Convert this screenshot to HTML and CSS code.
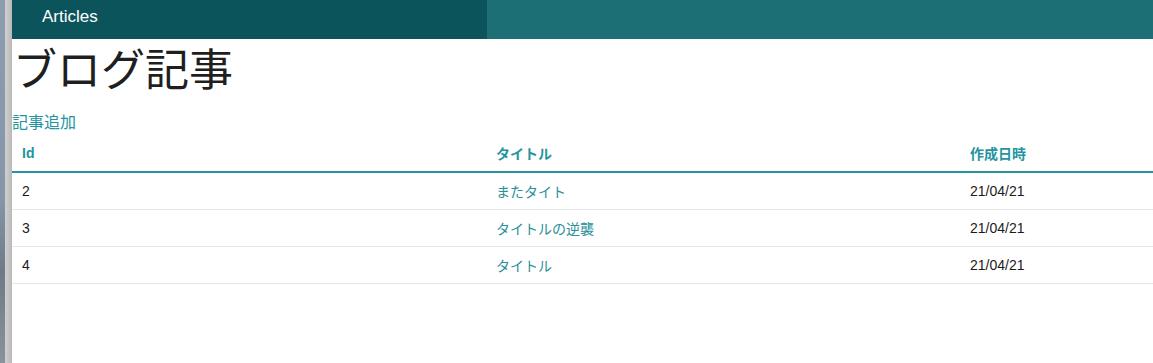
FILE: index.html
```html
<!DOCTYPE html>
<html lang="ja">
<head>
    <meta charset="UTF-8">
    <meta name="viewport" content="width=device-width, initial-scale=1.0">
    <title>Articles</title>
    <link rel="stylesheet" href="styles.css">
</head>
<body>
    <div class="desktop">
        <div class="desktop-bg"></div>
        <div class="window-edge"></div>
    </div>
    <div class="page">
        <nav class="top-nav">
            <div class="top-nav-title">Articles</div>
            <div class="top-nav-rest"></div>
        </nav>
        <div class="content">
            <h1 class="title">ブログ記事</h1>
            <a class="add-link" href="#">記事追加</a>
            <table class="articles">
                <thead>
                    <tr>
                        <th class="col-id">Id</th>
                        <th class="col-title">タイトル</th>
                        <th class="col-date">作成日時</th>
                    </tr>
                </thead>
                <tbody>
                    <tr>
                        <td>2</td>
                        <td><a href="#">またタイト</a></td>
                        <td>21/04/21</td>
                    </tr>
                    <tr>
                        <td>3</td>
                        <td><a href="#">タイトルの逆襲</a></td>
                        <td>21/04/21</td>
                    </tr>
                    <tr>
                        <td>4</td>
                        <td><a href="#">タイトル</a></td>
                        <td>21/04/21</td>
                    </tr>
                </tbody>
            </table>
        </div>
    </div>
</body>
</html>
```

FILE: styles.css
```css
html, body {
    margin: 0;
    height: 100%;
}

body {
    display: flex;
    font-family: "Liberation Sans", "Noto Sans CJK JP", sans-serif;
    color: #222;
    background-color: #fff;
    overflow: hidden;
}

.desktop {
    display: flex;
    flex: 0 0 12px;
}

.desktop-bg {
    width: 5px;
    background: linear-gradient(180deg, #8c9db0 0%, #8596a8 55%, #6f7a86 75%, #8a929c 100%);
}

.window-edge {
    width: 7px;
    background: linear-gradient(90deg, #d0d0d0, #b9b9b9);
}

.page {
    flex: 1;
    min-width: 0;
}

.top-nav {
    display: flex;
    height: 39px;
    background-color: #1b6f75;
}

.top-nav-title {
    width: 475px;
    box-sizing: border-box;
    padding: 7px 0 0 30px;
    background-color: #0b545b;
    color: #fff;
    font-size: 17px;
}

.title {
    margin: 4px 0 0 1px;
    font-size: 44px;
    font-weight: normal;
    line-height: 56px;
    color: #1f1f1f;
}

.add-link {
    display: block;
    margin-top: 12px;
    font-size: 16px;
    line-height: 24px;
    color: #2494a0;
    text-decoration: none;
}

.articles {
    border-collapse: collapse;
    width: 1141px;
    table-layout: fixed;
    font-size: 14px;
}

.col-id,
.col-title {
    width: 454px;
}

.articles th {
    text-align: left;
    font-weight: bold;
    color: #2494a0;
    padding: 0 10px;
    height: 36px;
    border-bottom: 2px solid #2494a0;
}

.articles td {
    padding: 0 10px;
    height: 36px;
    border-bottom: 1px solid #e6e6e6;
    color: #1b1b1b;
}

.articles td a {
    color: #2b8f99;
    text-decoration: none;
}
```
